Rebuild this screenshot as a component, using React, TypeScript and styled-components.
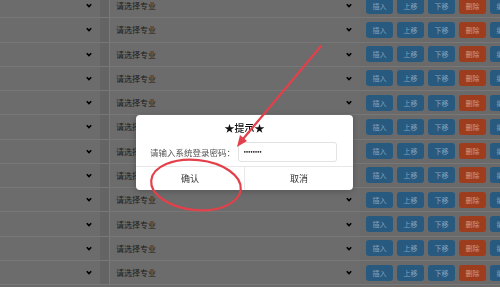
import styled, { createGlobalStyle } from 'styled-components';

const ROW_H = 24.27;
const ROWS = 12;

const GlobalStyle = createGlobalStyle`
  html, body {
    margin: 0;
    padding: 0;
    background: #6a6a6a;
    overflow: hidden;
  }
  body {
    font-family: "Noto Sans CJK SC", "Noto Sans", sans-serif;
  }
`;

const Page = styled.div`
  width: 500px;
  height: 287px;
  overflow: hidden;
  position: relative;
`;

const List = styled.div`
  margin-top: -6px;
  display: flex;
  flex-direction: column;
`;

const Row = styled.div`
  display: flex;
  align-items: center;
  height: ${ROW_H}px;
  box-sizing: border-box;
  border-bottom: 1px solid #777;
`;

const Select = styled.div<{ $w: number }>`
  width: ${(p) => p.$w}px;
  height: 100%;
  flex: none;
  display: flex;
  align-items: center;
  box-sizing: border-box;
  background: #6c6c6c;
  padding: 0 6px;
  font-size: 8px;
  color: #1c1c1c;
`;

const Gap = styled.div`
  width: 10px;
  height: 100%;
  flex: none;
  background: #646464;
  border-right: 1px solid #7a7a7a;
  box-sizing: border-box;
`;

const Label = styled.span`
  flex: 1;
  white-space: nowrap;
`;

const Chevron = styled.svg`
  width: 6px;
  height: 5px;
  flex: none;
  margin-right: 2px;
`;

const Buttons = styled.div`
  display: flex;
  gap: 4px;
  margin-left: 6px;
`;

const Btn = styled.div<{ $danger?: boolean }>`
  width: 27px;
  height: 16px;
  flex: none;
  border-radius: 3px;
  display: flex;
  align-items: center;
  justify-content: center;
  font-size: 7px;
  background: ${(p) => (p.$danger ? '#9e3d1e' : '#285a80')};
  color: ${(p) => (p.$danger ? '#d39985' : '#87a3bc')};
`;

const Dialog = styled.div`
  position: fixed;
  left: 136px;
  top: 115px;
  width: 217px;
  height: 75px;
  background: #fff;
  border-radius: 4px;
  box-shadow: 0 1px 6px rgba(0, 0, 0, 0.25);
  display: flex;
  flex-direction: column;
  overflow: hidden;
`;

const Title = styled.div`
  height: 26px;
  line-height: 26px;
  text-align: center;
  font-size: 10px;
  font-weight: 500;
  color: #111;
`;

const Field = styled.div`
  display: flex;
  align-items: center;
  padding: 0 15px 0 14px;
  height: 21px;
`;

const FieldLabel = styled.span`
  width: 88px;
  font-size: 8.5px;
  color: #555;
  white-space: nowrap;
`;

const Input = styled.div`
  width: 99px;
  height: 20px;
  box-sizing: border-box;
  border: 1px solid #e2e2e2;
  border-radius: 3px;
  display: flex;
  align-items: center;
  padding-left: 4px;
  font-family: "DejaVu Sans", sans-serif;
  font-size: 6px;
  letter-spacing: -1.3px;
  color: #222;
`;

const Footer = styled.div`
  margin-top: auto;
  height: 23px;
  display: flex;
  border-top: 1px solid #e8e8e8;
`;

const FooterBtn = styled.div`
  flex: 1;
  display: flex;
  align-items: center;
  justify-content: center;
  font-size: 9px;
  color: #333;
  & + & {
    border-left: 1px solid #e8e8e8;
  }
`;

const Marks = styled.svg`
  position: absolute;
  left: 0;
  top: 0;
  pointer-events: none;
`;

function Down() {
  return (
    <Chevron viewBox="0 0 6 5">
      <polyline points="0.8,1.2 3,3.6 5.2,1.2" fill="none" stroke="#000" strokeWidth="1.6" />
    </Chevron>
  );
}

export default function App() {
  const rows = Array.from({ length: ROWS }, (_, i) => i);

  return (
    <Page>
      <GlobalStyle />
      <List>
        {rows.map((i) => (
          <Row key={i}>
            <Select $w={100}>
              <Label />
              <Down />
            </Select>
            <Gap />
            <Select $w={250}>
              <Label>请选择专业</Label>
              <Down />
            </Select>
            <Buttons>
              <Btn>插入</Btn>
              <Btn>上移</Btn>
              <Btn>下移</Btn>
              <Btn $danger>删除</Btn>
              <Btn>编辑</Btn>
            </Buttons>
          </Row>
        ))}
      </List>

      <Dialog>
        <Title>★提示★</Title>
        <Field>
          <FieldLabel>请输入系统登录密码：</FieldLabel>
          <Input>••••••••</Input>
        </Field>
        <Footer>
          <FooterBtn>确认</FooterBtn>
          <FooterBtn>取消</FooterBtn>
        </Footer>
      </Dialog>

      <Marks width="500" height="287" viewBox="0 0 500 287">
        <line x1="321" y1="46" x2="243" y2="139" stroke="#e2404a" strokeWidth="2.2" strokeLinecap="round" />
        <polygon points="237,147 247,141 240,135" fill="#e2404a" />
        <ellipse
          cx="196"
          cy="185"
          rx="45"
          ry="25"
          transform="rotate(6 196 185)"
          fill="none"
          stroke="#e2404a"
          strokeWidth="2.2"
        />
      </Marks>
    </Page>
  );
}
